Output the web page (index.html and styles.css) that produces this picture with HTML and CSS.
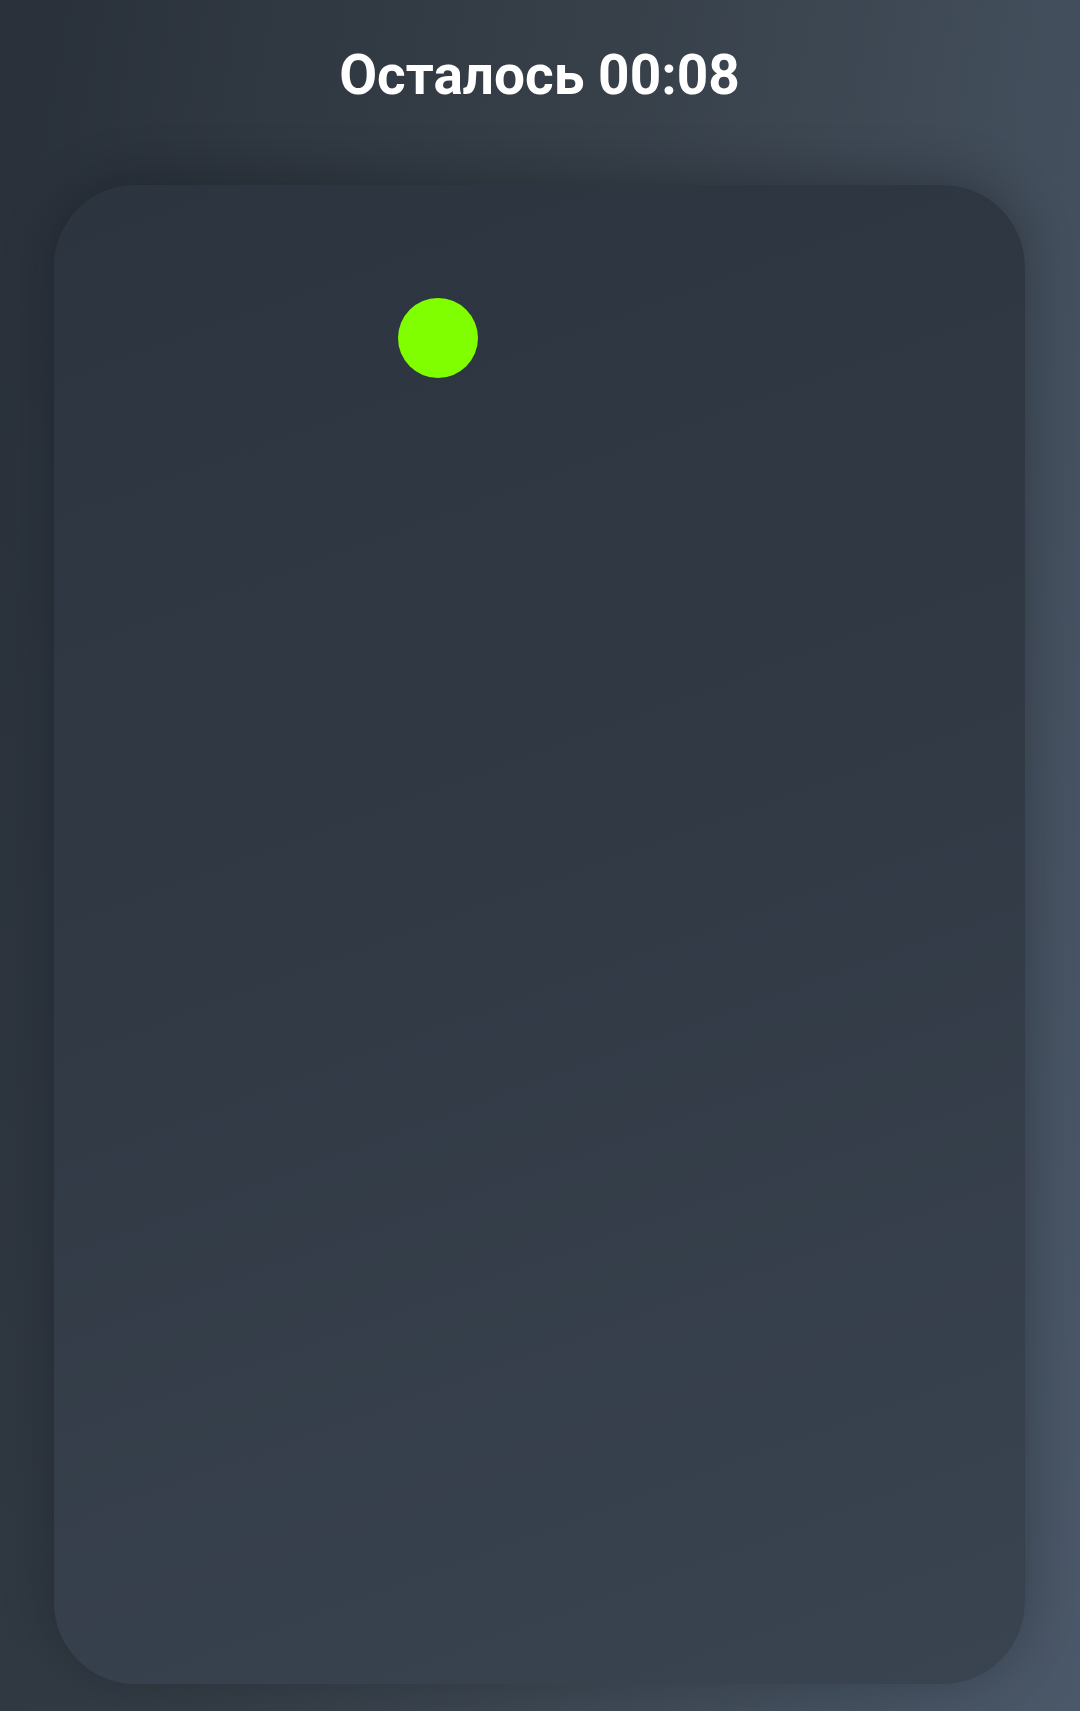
FILE: index.html
```html
<!DOCTYPE html>
<html lang="ru">
<head>
<meta charset="utf-8">
<link rel="stylesheet" href="styles.css">
</head>
<body>
<div class="screen">
  <div class="header">
    <h1 class="title">Осталось 00:08</h1>
  </div>
  <div class="field">
    <div class="target"></div>
  </div>
</div>
</body>
</html>
```
FILE: styles.css
```css
html, body {
  margin: 0;
  padding: 0;
}
body {
  width: 1080px;
  height: 1711px;
  overflow: hidden;
  background: linear-gradient(100deg, #29303a 0%, #374049 45%, #4b5869 100%);
  font-family: Roboto, "Noto Sans", "Liberation Sans", sans-serif;
}
.screen {
  box-sizing: border-box;
  height: 1711px;
  display: flex;
  flex-direction: column;
  padding: 0 55px 27px 54px;
}
.header {
  height: 185px;
  flex: none;
  box-sizing: border-box;
  padding-top: 48px;
}
.title {
  margin: 0;
  text-align: center;
  color: #ffffff;
  font-size: 55px;
  line-height: 55px;
  font-weight: 700;
}
.field {
  position: relative;
  flex: 1;
  border-radius: 82px;
  background: linear-gradient(160deg, #2c343f 0%, #313a45 50%, #3a4451 100%);
  box-shadow: 0 -8px 50px rgba(10, 14, 20, 0.3);
}
.target {
  position: absolute;
  left: 344px;
  top: 113px;
  width: 80px;
  height: 80px;
  border-radius: 50%;
  background: #80ff00;
}
```
